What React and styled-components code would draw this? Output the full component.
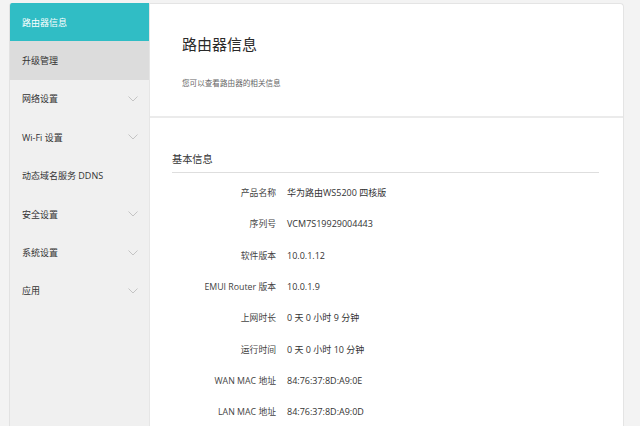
import React from "react";
import styled, { createGlobalStyle } from "styled-components";

const Global = createGlobalStyle`
  html, body { margin: 0; padding: 0; }
  body {
    background: #f3f3f3;
    font-family: "Open Sans", "Noto Sans CJK SC", sans-serif;
    color: #333;
    overflow: hidden;
  }
`;

const Page = styled.div`
  display: flex;
  align-items: stretch;
  height: 426px;
  padding: 3px 16px 0 9px;
  box-sizing: border-box;
`;

const Sidebar = styled.nav`
  width: 141px;
  flex: none;
  background: #f0f0f0;
  border-left: 1px solid #e2e2e2;
  border-right: 1px solid #e6e6e6;
  border-top-left-radius: 3px;
  box-sizing: border-box;
  overflow: hidden;
`;

const NavItem = styled.div`
  height: 38.4px;
  display: flex;
  align-items: center;
  justify-content: space-between;
  padding: 0 11px 0 12px;
  font-size: 9px;
  color: ${(p) => (p.$active ? "#ffffff" : "#333333")};
  background: ${(p) => (p.$active ? "#30bdc5" : p.$hover ? "#dcdcdc" : "transparent")};
`;

const Chevron = () => (
  <svg width="10" height="6" viewBox="0 0 10 6">
    <path d="M0.5 0.5 L5 5 L9.5 0.5" fill="none" stroke="#c4c4c4" strokeWidth="1" />
  </svg>
);

const Main = styled.main`
  flex: 1;
  background: #fff;
  border: 1px solid #e4e4e4;
  border-left: none;
  border-bottom: none;
  border-top-right-radius: 4px;
  display: flex;
  flex-direction: column;
`;

const Header = styled.header`
  height: 114px;
  flex: none;
  padding: 30px 0 0 32px;
  box-sizing: border-box;
  border-bottom: 2px solid #ebebeb;
`;

const Title = styled.h1`
  margin: 0;
  font-size: 15px;
  font-weight: 400;
  line-height: 20px;
  color: #2a2a2a;
`;

const Subtitle = styled.p`
  margin: 24px 0 0;
  font-size: 7.6px;
  line-height: 10px;
  color: #666;
`;

const Body = styled.section`
  padding: 34px 22px 0 22px;
`;

const SectionTitle = styled.h2`
  margin: 0;
  font-size: 10.2px;
  font-weight: 400;
  line-height: 14px;
  color: #333;
  padding-bottom: 6px;
  border-bottom: 1px solid #dedede;
  width: 427px;
`;

const Rows = styled.div`
  padding-top: 4px;
  display: grid;
  grid-template-columns: 104px 1fr;
  column-gap: 11px;
  grid-auto-rows: 31.3px;
  align-items: center;
`;

const Label = styled.div`
  text-align: right;
  font-size: 8.8px;
  color: #444;
  white-space: nowrap;
`;

const Value = styled.div`
  font-size: 9px;
  color: #333;
  white-space: nowrap;
`;

const nav = [
  { t: "路由器信息", active: true },
  { t: "升级管理", hover: true },
  { t: "网络设置", chev: true },
  { t: "Wi-Fi 设置", chev: true },
  { t: "动态域名服务 DDNS" },
  { t: "安全设置", chev: true },
  { t: "系统设置", chev: true },
  { t: "应用", chev: true },
];

const info = [
  ["产品名称", "华为路由WS5200 四核版"],
  ["序列号", "VCM7S19929004443"],
  ["软件版本", "10.0.1.12"],
  ["EMUI Router 版本", "10.0.1.9"],
  ["上网时长", "0 天 0 小时 9 分钟"],
  ["运行时间", "0 天 0 小时 10 分钟"],
  ["WAN MAC 地址", "84:76:37:8D:A9:0E"],
  ["LAN MAC 地址", "84:76:37:8D:A9:0D"],
];

export default function App() {
  return (
    <>
      <Global />
      <Page>
        <Sidebar>
          {nav.map((n) => (
            <NavItem key={n.t} $active={n.active} $hover={n.hover}>
              <span>{n.t}</span>
              {n.chev && <Chevron />}
            </NavItem>
          ))}
        </Sidebar>
        <Main>
          <Header>
            <Title>路由器信息</Title>
            <Subtitle>您可以查看路由器的相关信息</Subtitle>
          </Header>
          <Body>
            <SectionTitle>基本信息</SectionTitle>
            <Rows>
              {info.map(([l, v]) => (
                <React.Fragment key={l}>
                  <Label>{l}</Label>
                  <Value>{v}</Value>
                </React.Fragment>
              ))}
            </Rows>
          </Body>
        </Main>
      </Page>
    </>
  );
}
